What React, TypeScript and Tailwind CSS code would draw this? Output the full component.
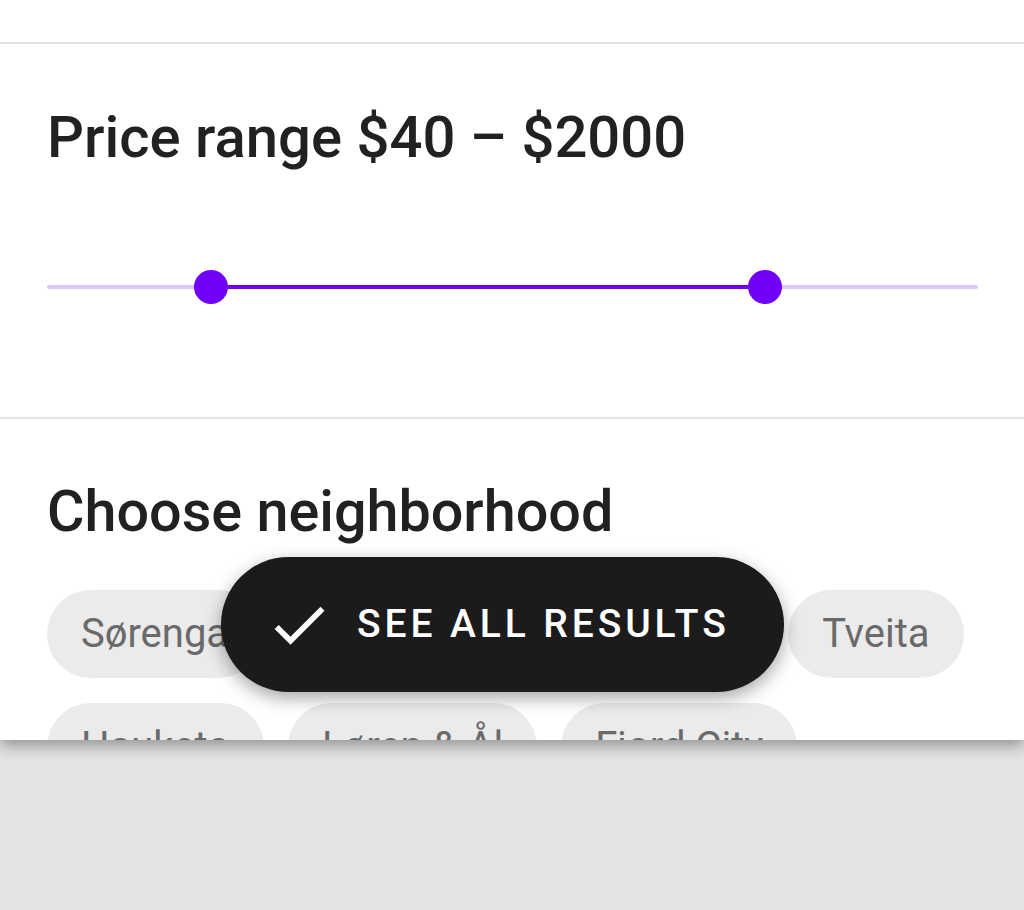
const MIN = 0;
const MAX = 2400;

function RangeSlider({ low, high }: { low: number; high: number }) {
    const lo = ((low - MIN) / (MAX - MIN)) * 100;
    const hi = ((high - MIN) / (MAX - MIN)) * 100;
    return (
        <div className="relative h-[34px]">
            <div className="absolute left-0 right-0 top-1/2 -translate-y-1/2 h-[4px] bg-[#dcc6fd] rounded-full" />
            <div
                className="absolute top-1/2 -translate-y-1/2 h-[4px] bg-[#7000f8]"
                style={{ left: `${lo}%`, width: `${hi - lo}%` }}
            />
            <div
                className="absolute top-0 w-[34px] h-[34px] -ml-[17px] rounded-full bg-[#7000f8]"
                style={{ left: `${lo}%` }}
            />
            <div
                className="absolute top-0 w-[34px] h-[34px] -ml-[17px] rounded-full bg-[#7000f8]"
                style={{ left: `${hi}%` }}
            />
        </div>
    );
}

// the two chips behind the button have fixed widths so Tveita lands in place
const neighborhoods: { name: string; w?: string }[] = [
    { name: 'Sørenga' },
    { name: 'Grünerløkka', w: 'w-[250px] justify-center' },
    { name: 'Bjørvika', w: 'w-[204px] justify-center' },
    { name: 'Tveita' },
    { name: 'Hauketo' },
    { name: 'Løren & Ål' },
    { name: 'Fjord City' },
];

export default function App() {
    return (
        <div className="min-h-[910px] bg-[#e4e4e4] font-['Roboto',sans-serif]">
            <div className="relative z-10 h-[740px] overflow-hidden bg-white shadow-[0_6px_14px_rgba(0,0,0,0.35)]">
                <div className="h-[42px]" />
                <div className="h-[2px] bg-[#e2e2e2]" />

                {/* Price range */}
                <div className="px-[47px] pt-[63px] pb-[113px]">
                    <h2 className="text-[58px] leading-[60px] font-medium text-[#212121]">
                        Price range $40 – $2000
                    </h2>
                    <div className="mt-[103px] -mr-[1px]">
                        <RangeSlider low={422} high={1851} />
                    </div>
                </div>

                <div className="h-[2px] bg-[#e2e2e2]" />

                {/* Neighborhoods */}
                <div className="px-[47px] pt-[63px]">
                    <h2 className="text-[57.5px] leading-[60px] font-medium text-[#212121]">
                        Choose neighborhood
                    </h2>
                    <div className="mt-[48px] flex flex-wrap gap-x-[24px] gap-y-[25px]">
                        {neighborhoods.map((n) => (
                            <div
                                key={n.name}
                                className={`h-[88px] px-[34px] flex items-center rounded-full bg-[#ebebeb] text-[40px] text-[#6a6a6a] ${n.w ?? ''}`}
                            >
                                {n.name}
                            </div>
                        ))}
                    </div>
                </div>

                {/* Floating action */}
                <button className="absolute left-[221px] top-[557px] w-[563px] h-[135px] rounded-full bg-[#1b1b1b] text-white flex items-center pl-[44px] gap-[24px] shadow-[0_6px_18px_rgba(0,0,0,0.35)]">
                    <svg viewBox="0 0 24 24" className="w-[68px] h-[68px] shrink-0" fill="currentColor">
                        <path d="M9 16.17 4.83 12l-1.42 1.41L9 19 21 7l-1.41-1.41z" />
                    </svg>
                    <span className="text-[39px] font-medium tracking-[0.1em]">SEE ALL RESULTS</span>
                </button>
            </div>
        </div>
    );
}
